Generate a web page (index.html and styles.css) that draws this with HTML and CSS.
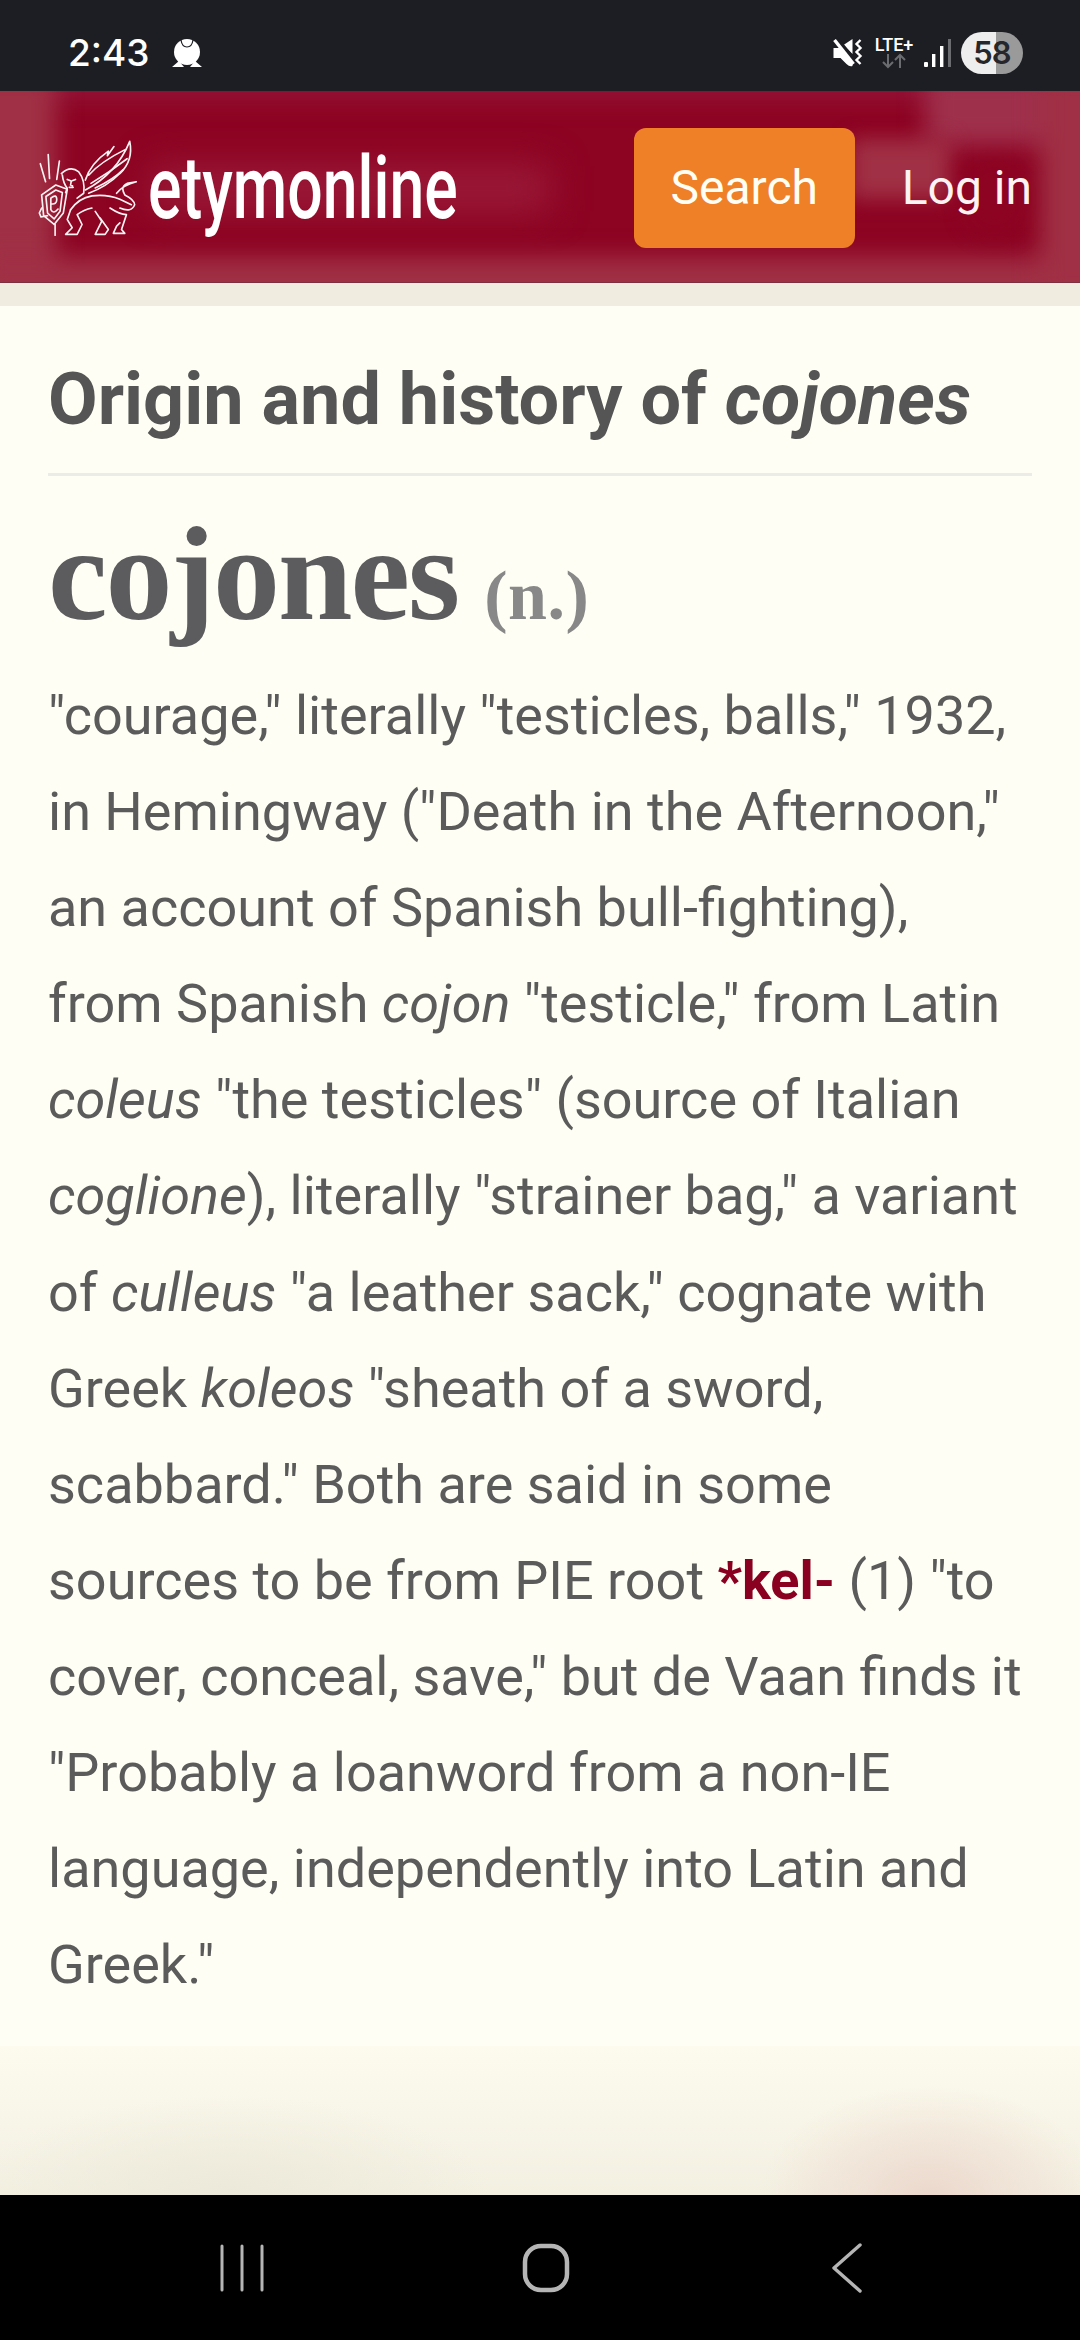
FILE: index.html
```html
<!DOCTYPE html>
<html lang="en">
<head>
<meta charset="utf-8">
<title>cojones | Origin and history of cojones</title>
<link rel="stylesheet" href="styles.css">
</head>
<body>
<div class="phone">
  <div class="status">
    <div class="status-left">
      <span class="time">2:43</span>
      <svg class="notif" width="34" height="32" viewBox="0 0 32 32"><circle cx="16" cy="15" r="13" fill="#fff"/><path d="M1 30 L8 24 L13 30Z M19 30 L24 24 L31 30Z" fill="#fff"/><path d="M10 3 Q11 10 16 10 Q21 10 22 3" fill="none" stroke="#1d1e24" stroke-width="1.2"/></svg>
    </div>
    <div class="status-right">
      <svg width="33" height="32" viewBox="0 0 32 32"><path d="M1 11 H7 L20 24 V29 Q17 30 14 27 L8 21 H1 Z" fill="#fff"/><path d="M11 8 L20 2 V17 Z" fill="#fff"/><path d="M3 1 L22 24" stroke="#1d1e24" stroke-width="5"/><path d="M2 3 L21 27" stroke="#fff" stroke-width="3.4"/><path d="M28 3 L24 7 L28 11 L24 15 L28 19 L24 23 L28 27" fill="none" stroke="#fff" stroke-width="2.4"/></svg>
      <div class="lte">
        <span class="lte-label">LTE+</span>
        <svg width="24" height="16" viewBox="0 0 24 16"><path d="M6 1v13M1 9l5 5 5-5M18 15V2M13 7l5-5 5 5" fill="none" stroke="#6b6c70" stroke-width="2"/></svg>
      </div>
      <svg width="28" height="30" viewBox="0 0 28 30"><rect x="1" y="24" width="4" height="5" rx="1" fill="#fff"/><rect x="9" y="16" width="3.4" height="13" fill="#fff"/><rect x="17" y="8" width="3.4" height="21" fill="#fff"/><rect x="25" y="1" width="3" height="28" fill="#6b6c70"/></svg>
      <div class="battery">58</div>
    </div>
  </div>
  <header class="header">
    <div class="blur blur-top"></div>
    <div class="blur blur-left"></div>
    <div class="blur blur-bottom"></div>
    <div class="blur blur-ghost"></div>
    <div class="blur blur-topright"></div>
    <div class="blur blur-edge"></div>
    <div class="blur blur-gap"></div>
    <div class="blur blur-dark"></div>
    <div class="brand">
      <svg class="logo" width="100" height="96" viewBox="50 28 300 292" fill="none" stroke="#fdf3f3" stroke-width="5" stroke-linejoin="round" stroke-linecap="round">
        <path d="M58 100 L74 155 M82 72 L86 145 M116 92 L108 148"/>
        <path d="M62 195 L105 165 L140 178 L128 250 L100 285 L68 258 Z"/>
        <path d="M75 200 L105 180 L125 188 L118 245 L100 268 L80 250 Z"/>
        <path d="M90 240 V205 Q108 190 108 210 Q108 225 90 222 M90 240 Q98 255 112 238"/>
        <path d="M62 235 L55 250 L60 262 L80 258 M103 285 V318"/>
        <path d="M122 130 Q150 105 175 125 Q195 150 190 190 L170 205 M125 135 Q128 160 140 175 L135 188"/>
        <path d="M140 148 L150 152 M165 148 L155 152 M152 154 L150 165 L156 167 M146 172 L158 172"/>
        <path d="M195 150 Q210 100 265 62 L262 76 L282 48 M205 135 Q240 95 320 55 M195 180 Q290 130 330 32 Q342 90 300 130 Q260 170 205 190"/>
        <path d="M212 160 Q270 125 322 85 M225 174 Q280 148 310 118"/>
        <path d="M150 240 Q175 205 215 198 Q260 192 300 208 L335 225"/>
        <path d="M290 190 Q310 165 350 155 L322 160 Q300 170 315 195 Q345 210 345 225 Q335 250 300 235"/>
        <path d="M150 240 L140 270 L155 295 L135 315 H170 L185 285 L170 255 Q190 240 215 235"/>
        <path d="M225 245 L245 275 L225 315 H255 L265 300 L240 265"/>
        <path d="M270 235 Q300 255 320 255 L305 300 L315 312 H280 L290 290 L300 280"/>
      </svg>
      <span class="wordmark"><span class="wordmark-text">etymonline</span></span>
    </div>
    <div class="actions">
      <button class="search">Search</button>
      <a class="login">Log in</a>
    </div>
  </header>
  <div class="band"></div>
  <main class="main">
    <h1 class="title">Origin and history of <em>cojones</em></h1>
    <section class="entry">
      <h2 class="word">cojones<span class="pos"> (n.)</span></h2>
      <p class="def">"courage," literally "testicles, balls," 1932, in Hemingway ("Death in the Afternoon," an account of Spanish bull-fighting), from Spanish <em>cojon</em> "testicle," from Latin <em>coleus</em> "the testicles" (source of Italian <em>coglione</em>), literally "strainer bag," a variant of <em>culleus</em> "a leather sack," cognate with Greek <em>koleos</em> "sheath of a sword, scabbard." Both are said in some sources to be from PIE root <a class="xref">*kel-</a> (1) "to cover, conceal, save," but de Vaan finds it "Probably a loanword from a non-IE language, independently into Latin and Greek."</p>
    </section>
    <div class="fade"></div>
  </main>
  <nav class="nav">
    <svg width="46" height="48" viewBox="0 0 46 48" fill="none" stroke="#b5b5b5" stroke-width="3" stroke-linecap="round"><path d="M3 2v44M23 2v44M43 2v44"/></svg>
    <svg width="48" height="50" viewBox="0 0 48 50" fill="none" stroke="#b5b5b5" stroke-width="4.5"><rect x="3" y="3" width="42" height="44" rx="16"/></svg>
    <svg width="36" height="50" viewBox="-4 0 36 50" fill="none" stroke="#b5b5b5" stroke-width="3.4" stroke-linecap="round" stroke-linejoin="round"><path d="M29 2 L3 25 L29 48"/></svg>
  </nav>
</div>
</body>
</html>
```
FILE: styles.css
```css
* { box-sizing: border-box; }
html, body { margin: 0; padding: 0; }
body { font-family: Roboto, sans-serif; background: #fffef4; }
.phone { width: 1080px; height: 2340px; display: flex; flex-direction: column; overflow: hidden; }

.status { height: 91px; flex: none; background: #1d1e24; color: #fff; display: flex; justify-content: space-between; align-items: center; padding: 14px 57px 0 68px; }
.status-left { display: flex; align-items: center; gap: 20px; }
.time { font-family: Inter, Roboto, sans-serif; font-size: 37px; font-weight: 500; line-height: 40px; }
.status-right { display: flex; align-items: center; gap: 10px; }
.lte { display: flex; flex-direction: column; align-items: center; width: 38px; }
.lte-label { font-size: 18px; font-weight: 500; line-height: 16px; }
.battery { width: 62px; height: 42px; border-radius: 21px; background: linear-gradient(90deg, #eeeeee 0 57%, #9a9a9a 57%); color: #26272c; font-family: Inter, Roboto, sans-serif; font-size: 31px; font-weight: 600; display: flex; align-items: center; justify-content: center; letter-spacing: -1px; }

.header { position: relative; height: 192px; flex: none; background: #8d0322; display: flex; align-items: center; justify-content: space-between; padding: 0 48px 0 37px; overflow: hidden; border-bottom: 1px solid #7c3040; }
.blur { position: absolute; background: #a03045; filter: blur(12px); }
.blur-top { left: -20px; right: -20px; top: -22px; height: 30px; background: #94143a; }
.blur-left { left: -30px; top: -20px; width: 86px; height: 240px; }
.blur-bottom { left: -20px; right: -20px; top: 166px; height: 60px; }
.blur-ghost { left: 150px; top: 75px; width: 400px; height: 45px; background: #9a1a38; filter: blur(18px); }
.blur-topright { left: 925px; top: -20px; width: 190px; height: 75px; background: #9f304c; }
.blur-edge { left: 1040px; top: -20px; width: 70px; height: 230px; }
.blur-gap { left: 850px; top: 48px; width: 100px; height: 60px; background: #a03045; filter: blur(10px); }
.blur-dark { left: 965px; top: 70px; width: 60px; height: 75px; border-radius: 30px; background: #8d0322; filter: blur(10px); }
.brand { position: relative; display: flex; align-items: center; gap: 11px; margin-top: 2px; }
.wordmark { display: block; width: 307px; height: 90px; }
.wordmark-text { display: inline-block; font-family: Roboto, sans-serif; font-size: 88px; line-height: 90px; color: #fff; font-weight: 500; white-space: nowrap; transform: scaleX(0.71); transform-origin: left center; }
.actions { position: relative; display: flex; align-items: center; gap: 47px; margin-top: 2px; }
.search { width: 221px; height: 120px; border: 0; border-radius: 12px; background: #f08027; color: #fffef4; font-family: Roboto, sans-serif; font-size: 48px; padding: 0; }
.login { color: #fdf3f3; font-size: 48px; }

.band { height: 23px; flex: none; background: #f0ecdf; }
.main { position: relative; flex: 1; background: #fffef4; padding: 0 48px; color: #5b5b5b; }
.title { margin: 0; padding: 49px 0 28px; font-size: 72px; line-height: 90px; font-weight: 700; color: #555; border-bottom: 3px solid #ebebe8; white-space: nowrap; }
.word { margin: 0; padding-top: 26px; font-family: "Liberation Serif", serif; font-size: 134px; line-height: 144px; font-weight: 700; letter-spacing: -2px; color: #5c5c5e; white-space: nowrap; }
.pos { font-size: 70px; color: #888; letter-spacing: 0.5px; margin-left: 8px; }
.def { margin: 0; padding-top: 0; font-size: 54px; line-height: 96.1px; color: #5b5b5b; }
.xref { color: #8a0020; font-weight: 700; }
.fade { position: absolute; left: 0; right: 0; bottom: 0; height: 149px; background: radial-gradient(170px 110px at 930px 150px, #ecd8cd 0, rgba(236,216,205,0) 100%), radial-gradient(260px 100px at 230px 150px, #ece9da 0, rgba(236,233,218,0) 100%), linear-gradient(#fcfbee, #f3f0e2); }

.nav { height: 145px; flex: none; background: #000; display: flex; align-items: center; justify-content: space-between; padding: 0 217px 0 219px; }
```
